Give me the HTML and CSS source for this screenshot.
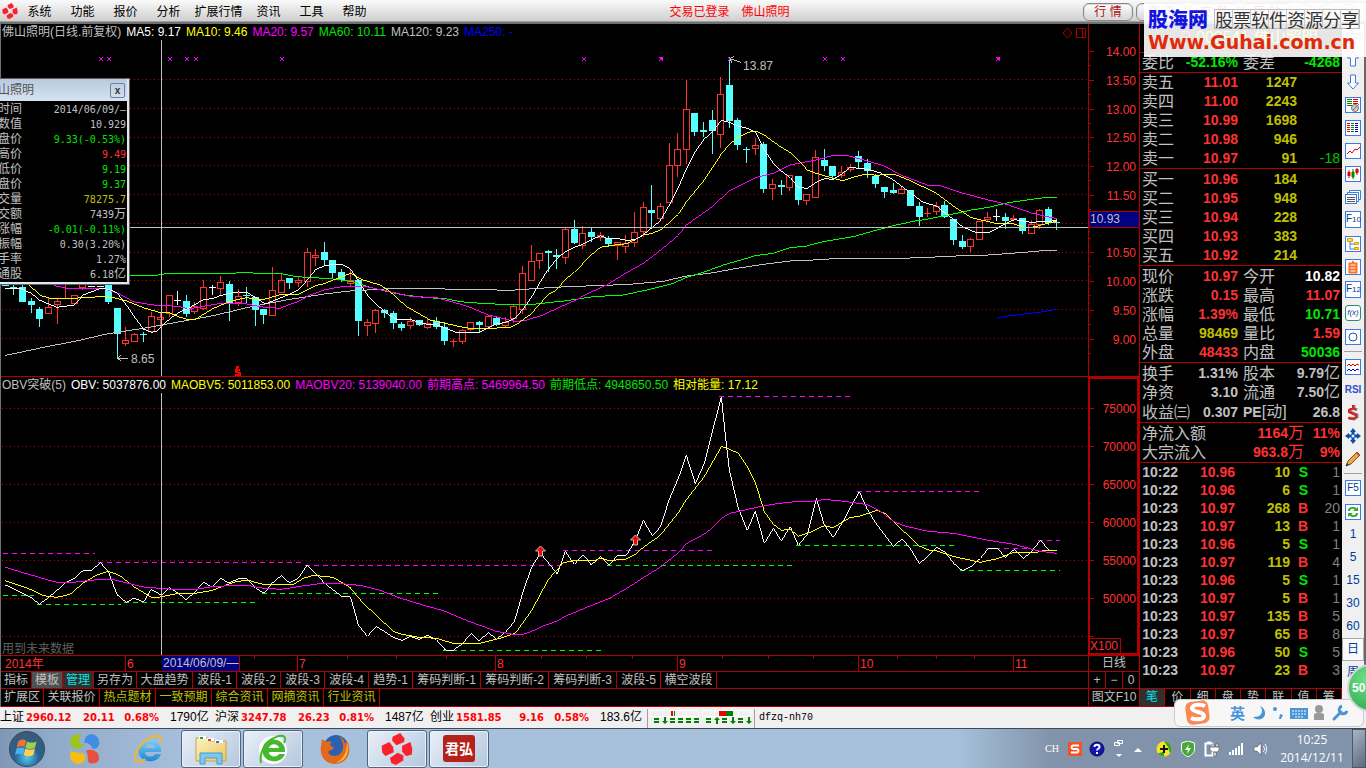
FILE: index.html
```html
<!DOCTYPE html>
<html lang="zh-CN">
<head>
<meta charset="utf-8">
<title>佛山照明 日线</title>
<link rel="stylesheet" href="styles.css">
</head>
<body>
<svg class="defs" aria-hidden="true">
  <defs>
    <symbol id="brand" viewBox="0 0 100 100"><g fill="#fb202c"><path d="M36 12 60 0l14 18-2 10-24 10-13-14z"/><path d="M66 40 92 28l6 22-2 18-18 4-12-14z"/><path d="M2 40 26 28l12 16 2 16-26 12L4 62z"/><path d="M28 78 52 62l18 8 0 16-24 14-14-6z"/></g></symbol>
    <symbol id="flag" viewBox="0 0 40 40"><path d="M9 13c4-3 7-3 10-1l-2 8c-4-2-7-1-10 1z" fill="#f0713a"/><path d="M20 13c4 2 8 2 12 0l-2 8c-4 2-8 2-12 0z" fill="#9bd04a"/><path d="M7 22c4-2 7-2 10 0l-2 8c-3-2-7-2-10 0z" fill="#4ab3ee"/><path d="M18 22c4 2 8 2 12 0l-2 8c-4 2-8 2-12 0z" fill="#ffd24a"/></symbol>
    <radialGradient id="orb" cx=".5" cy=".75" r=".7"><stop offset="0" stop-color="#4fc8f2"/><stop offset=".5" stop-color="#27628f"/><stop offset="1" stop-color="#3c5a75"/></radialGradient>
    <linearGradient id="ie" x1="0" y1="0" x2="0" y2="1"><stop offset="0" stop-color="#7fd0f7"/><stop offset="1" stop-color="#1f86d3"/></linearGradient>
    <linearGradient id="folder" x1="0" y1="0" x2="1" y2="1"><stop offset="0" stop-color="#fdf2c0"/><stop offset="1" stop-color="#e9c75f"/></linearGradient>
  </defs>
</svg>

<header class="menubar">
  <nav class="menu">
    <svg class="menu-logo"><use href="#brand"/></svg>
    <button>系统</button><button>功能</button><button>报价</button><button>分析</button><button class="wide">扩展行情</button><button>资讯</button><button>工具</button><button>帮助</button>
  </nav>
  <p class="session"><span>交易已登录</span><span>佛山照明</span></p>
  <div class="modes">
    <button>行 情</button><button>资 讯</button><button>交 易</button><button>网 站</button>
    <svg class="win-ctl" viewBox="0 0 64 20"><g fill="#eee" stroke="#999"><circle cx="10" cy="10" r="8"/><circle cx="32" cy="10" r="8"/><circle cx="54" cy="10" r="8"/></g><path d="M6 12h8M28 7h8v6h-8zM50 6l8 8m0-8-8 8" fill="none" stroke="#777" stroke-width="2"/></svg>
  </div>
</header>

<main class="workspace">
  <section class="board">
    <div class="pane pane-price">
      <div class="plot">
        <div class="legend">
          <span class="gray">佛山照明(日线.前复权)</span><span class="white">MA5: 9.17</span><span class="yellow">MA10: 9.46</span><span class="magenta">MA20: 9.57</span><span class="green">MA60: 10.11</span><span class="gray">MA120: 9.23</span><span class="blue">MA250: -</span>
          <svg class="legend-tools" viewBox="0 0 24 12"><path d="M5.500 1 10 6l-4.500 5L1 6zM14.500 1.500h9v9h-9zM20.500 1.500v9" fill="none" stroke="#b00000"/></svg>
        </div>
        <svg class="chart" id="price" viewBox="1 40 1087 336" preserveAspectRatio="none"></svg>
      </div>
      <svg class="axis" id="price-axis" viewBox="1088 24 51 352" preserveAspectRatio="none"></svg>
    </div>
    <div class="pane pane-obv">
      <div class="plot">
        <div class="legend">
          <span class="gray">OBV突破(5)</span><span class="white">OBV: 5037876.00</span><span class="yellow">MAOBV5: 5011853.00</span><span class="magenta">MAOBV20: 5139040.00</span><span class="magenta">前期高点: 5469964.50</span><span class="green">前期低点: 4948650.50</span><span class="yellow">相对能量: 17.12</span>
        </div>
        <svg class="chart" id="obv" viewBox="1 18 1087 262" preserveAspectRatio="none"></svg>
      </div>
      <svg class="axis" id="obv-axis" viewBox="1088 377 51 278" preserveAspectRatio="none"></svg>
    </div>
    <div class="row row-date">
      <svg class="dates" viewBox="1 656 1087 15" preserveAspectRatio="none">
        <path class="tick" d="M125.500 656v15M239.500 656v15M297.500 656v15M495.500 656v15M677.500 656v15M858.500 656v15M1013.500 656v15M254.500 656v3M347.500 656v3M396.500 656v3M446.500 656v3M541.500 656v3M586.500 656v3M632.500 656v3M722.500 656v3M768.500 656v3M813.500 656v3M897.500 656v3M936.500 656v3M974.500 656v3"/>
        <rect x="162" y="656" width="77" height="15" fill="#000080"/>
        <g class="red"><text x="5" y="668">2014年</text><text x="127" y="668">6</text><text x="299" y="668">7</text><text x="497" y="668">8</text><text x="679" y="668">9</text><text x="860" y="668">10</text><text x="1015" y="668">11</text></g>
        <text class="gray" x="163" y="667">2014/06/09/—</text>
      </svg>
      <button class="side-cell">日线</button>
    </div>
    <div class="row row-tabs">
      <div class="tabs"><button>指标</button><button class="picked">模板</button><button class="manage">管理</button><button>另存为</button><button class="t4">大盘趋势</button><button class="t3">波段-1</button><button class="t3">波段-2</button><button class="t3">波段-3</button><button class="t3">波段-4</button><button class="t3">趋势-1</button><button class="t5">筹码判断-1</button><button class="t5">筹码判断-2</button><button class="t5">筹码判断-3</button><button class="t3">波段-5</button><button class="t4">横空波段</button></div>
      <div class="side-cell zoomers"><button>+</button><button>−</button><button>0</button></div>
    </div>
    <div class="row row-links">
      <div class="tabs"><button>扩展区</button><button class="t4">关联报价</button><button class="t4 gold">热点题材</button><button class="t4 gold">一致预期</button><button class="t4 gold">综合资讯</button><button class="t4 gold">网摘资讯</button><button class="t4 gold">行业资讯</button></div>
      <button class="side-cell">图文F10</button>
    </div>
  </section>

  <section class="quote">
    <h1 class="stock"><span class="red">R</span> 000541 佛山照明</h1>
    <table class="q duo lead"><tr><th>委比</th><td class="green">-52.16%</td><th>委差</th><td class="green">-4268</td></tr></table>
    <table class="q depth">
      <tr><th>卖五</th><td>11.01</td><td>1247</td><td></td></tr>
      <tr><th>卖四</th><td>11.00</td><td>2243</td><td></td></tr>
      <tr><th>卖三</th><td>10.99</td><td>1698</td><td></td></tr>
      <tr><th>卖二</th><td>10.98</td><td>946</td><td></td></tr>
      <tr><th>卖一</th><td>10.97</td><td>91</td><td>-18</td></tr>
    </table>
    <table class="q depth">
      <tr><th>买一</th><td>10.96</td><td>184</td><td></td></tr>
      <tr><th>买二</th><td>10.95</td><td>948</td><td></td></tr>
      <tr><th>买三</th><td>10.94</td><td>228</td><td></td></tr>
      <tr><th>买四</th><td>10.93</td><td>383</td><td></td></tr>
      <tr><th>买五</th><td>10.92</td><td>214</td><td></td></tr>
    </table>
    <table class="q duo">
      <tr><th>现价</th><td class="red">10.97</td><th>今开</th><td class="white">10.82</td></tr>
      <tr><th>涨跌</th><td class="red">0.15</td><th>最高</th><td class="red">11.07</td></tr>
      <tr><th>涨幅</th><td class="red">1.39%</td><th>最低</th><td class="green">10.71</td></tr>
      <tr><th>总量</th><td class="gold">98469</td><th>量比</th><td class="red">1.59</td></tr>
      <tr><th>外盘</th><td class="red">48433</td><th>内盘</th><td class="green">50036</td></tr>
    </table>
    <table class="q duo">
      <tr><th>换手</th><td>1.31%</td><th>股本</th><td>9.79<i>亿</i></td></tr>
      <tr><th>净资</th><td>3.10</td><th>流通</th><td>7.50<i>亿</i></td></tr>
      <tr><th>收益㈢</th><td>0.307</td><th><b>PE</b>[动]</th><td>26.8</td></tr>
    </table>
    <table class="q flow">
      <tr><th>净流入额</th><td class="red">1164<i>万</i></td><td class="red">11%</td></tr>
      <tr><th>大宗流入</th><td class="red">963.8<i>万</i></td><td class="red">9%</td></tr>
    </table>
    <table class="q ticks">
      <tr><td>10:22</td><td>10.96</td><td>10</td><td class="green">S</td><td>1</td></tr>
      <tr><td>10:22</td><td>10.96</td><td>6</td><td class="green">S</td><td>1</td></tr>
      <tr><td>10:23</td><td>10.97</td><td>268</td><td class="red">B</td><td>20</td></tr>
      <tr><td>10:23</td><td>10.97</td><td>13</td><td class="red">B</td><td>1</td></tr>
      <tr><td>10:23</td><td>10.96</td><td>5</td><td class="green">S</td><td>1</td></tr>
      <tr><td>10:23</td><td>10.97</td><td>119</td><td class="red">B</td><td>4</td></tr>
      <tr><td>10:23</td><td>10.96</td><td>5</td><td class="green">S</td><td>1</td></tr>
      <tr><td>10:23</td><td>10.97</td><td>5</td><td class="red">B</td><td>1</td></tr>
      <tr><td>10:23</td><td>10.97</td><td>135</td><td class="red">B</td><td>5</td></tr>
      <tr><td>10:23</td><td>10.97</td><td>65</td><td class="red">B</td><td>8</td></tr>
      <tr><td>10:23</td><td>10.96</td><td>50</td><td class="green">S</td><td>5</td></tr>
      <tr><td>10:23</td><td>10.97</td><td>23</td><td class="red">B</td><td>3</td></tr>
    </table>
    <div class="quote-tabs"><button class="on">笔</button><button>价</button><button>细</button><button>盘</button><button>势</button><button>联</button><button>值</button><button>筹</button></div>
  </section>

  <aside class="toolbar">
    <button aria-label="后退"><svg viewBox="0 0 16 16"><path d="M1 8l6-6v4h8v4H7v4z" fill="#fff" stroke="#3d7be0"/></svg></button>
    <button aria-label="上"><svg viewBox="0 0 16 16"><path d="M8 1l5.500 6h-3v8h-5V7h-3z" fill="#fff" stroke="#3d7be0"/></svg></button>
    <button aria-label="下"><svg viewBox="0 0 16 16"><path d="M8 15l5.500-6h-3V1h-5v8h-3z" fill="#fff" stroke="#3d7be0"/></svg></button>
    <button aria-label="报价刷新"><svg viewBox="0 0 16 16"><rect class="frame" x=".5" y=".5" width="15" height="15"/><path d="M2 2.500h5M2 4.500h5M2 6.500h5M2 8.500h5" stroke="#080"/><path d="M8 2.500h5M8 4.500h5M8 6.500h5" stroke="#e00000"/><circle cx="10" cy="11" r="3.500" fill="#ccc" stroke="#777"/><path d="M7 14l7-7" stroke="#777"/></svg></button>
    <button aria-label="列表"><svg viewBox="0 0 16 16"><rect class="frame" x=".5" y=".5" width="15" height="15"/><path d="M2 3.500h3M2 5.500h3M2 7.500h3M2 9.500h3M2 11.500h3" stroke="#f00000"/><path d="M6 3.500h3M6 5.500h3M6 7.500h3M6 9.500h3M6 11.500h3" stroke="#080"/><path d="M10 3.500h3M10 5.500h3M10 7.500h3M10 9.500h3M10 11.500h3" stroke="#00c"/></svg></button>
    <button aria-label="分时"><svg viewBox="0 0 16 16"><rect class="frame" x=".5" y=".5" width="15" height="15"/><path d="M2 11l3-3 2 2 3-4 2 1 3-3" fill="none" stroke="#e00000"/></svg></button>
    <button aria-label="K线"><svg viewBox="0 0 16 16"><rect class="frame" x=".5" y=".5" width="15" height="15"/><path d="M4 4v8M12 2v7" stroke="#e00000"/><path d="M2.500 6h3v4h-3zM10.500 3h3v4h-3z" fill="#e00000"/><path d="M8 3v10M7 6h2v5H7z" fill="#080" stroke="#080"/></svg></button>
    <button aria-label="资料"><svg viewBox="0 0 16 16"><path class="frame" d="M4.500 1.500h11v9h-11z"/><path class="frame" d="M2.500 3.500h11v9h-11z"/><rect class="frame" x=".5" y="5.500" width="11" height="9"/><path d="M2 8.500h8M2 10.500h8M2 12.500h8" stroke="#555"/></svg></button>
    <button class="fkey">F<small>10</small></button>
    <button aria-label="板块"><svg viewBox="0 0 16 16"><rect class="frame" x=".5" y=".5" width="15" height="15"/><path d="M5 5v8h5M5 8h5" fill="none" stroke="#3d7be0"/><path d="M2.500 2.500h5v3h-5zM9.500 6.500h4v2h-4zM9.500 11.500h4v2h-4z" fill="#ffd94a" stroke="#d9a000"/></svg></button>
    <button aria-label="自选"><svg viewBox="0 0 16 16"><rect class="frame" x=".5" y=".5" width="15" height="15"/><path d="M4.500 4.500h7v9h-7zM4 7.500h8M4 10.500h8M8 2v2" fill="#fff" stroke="#ff7328" stroke-width="2"/></svg></button>
    <button class="fkey">F<small>12</small></button>
    <button class="fx">f(x)</button>
    <button aria-label="圆"><svg viewBox="0 0 16 16"><rect class="frame" x=".5" y=".5" width="15" height="15"/><circle cx="8" cy="8" r="4" fill="none" stroke="#1452b8"/></svg></button>
    <hr>
    <button aria-label="叠加"><svg viewBox="0 0 16 16"><rect class="frame" x=".5" y=".5" width="15" height="15"/><path d="M2 7l2-2 2 2 2-2 2 2 2-2 2 1" fill="none" stroke="#e00000"/><path d="M2 12l2-2 2 2 2-2 2 2 2-2 2 1" fill="none" stroke="#00c"/></svg></button>
    <button class="rsi">RSI</button>
    <button aria-label="S"><svg viewBox="0 0 16 16"><path d="M12 5L9 3 5 5v2l7 3v2l-3 2-5-1M9 0v3" fill="none" stroke="#8a7f7f" stroke-width="3"/><path d="M11 5L8 3 4 5v2l7 3v2l-3 2-5-1M8 0v3" fill="none" stroke="#d82020" stroke-width="2"/></svg></button>
    <button aria-label="移动"><svg viewBox="0 0 16 16"><path d="M8 0l3 4H5zM8 16l3-4H5zM0 8l4-3v6zM16 8l-4-3v6z" fill="#0c4cae"/><path d="M8 3v10M3 8h10" stroke="#0c4cae" stroke-width="3"/><circle cx="8" cy="8" r="1.500" fill="#eee"/></svg></button>
    <button aria-label="画线"><svg viewBox="0 0 16 16"><path d="M1 15l2-5 9-9 3 3-9 9z" fill="#eba840" stroke="#7a5524"/><path d="M1 15l1-3 2 2z" fill="#333"/><path d="M11 2l3 3 1-1-3-3z" fill="#d04040"/></svg></button>
    <hr>
    <button class="fkey">F5</button>
    <button aria-label="刷新"><svg viewBox="0 0 16 16"><rect class="frame" x=".5" y=".5" width="15" height="15"/><path d="M4 7c0-4 6-4 7-1m1 3c0 4-6 4-7 1" fill="none" stroke="#35a535" stroke-width="2"/><path d="M8 7h5V3zM8 9H3v4z" fill="#35a535"/></svg></button>
    <button>1</button><button>5</button><button>15</button><button>30</button><button>60</button>
    <button class="period">日</button><button class="period off">周</button>
  </aside>

  <section class="tip">
    <h2>佛山照明 <button aria-label="关闭">x</button></h2>
    <table>
      <tr><th>时间</th><td>2014/06/09/—</td></tr>
      <tr><th>数值</th><td>10.929</td></tr>
      <tr><th>开盘价</th><td class="green">9.33(-0.53%)</td></tr>
      <tr><th>最高价</th><td class="red">9.49</td></tr>
      <tr><th>最低价</th><td class="green">9.19</td></tr>
      <tr><th>收盘价</th><td class="green">9.37</td></tr>
      <tr><th>成交量</th><td class="gold">78275.7</td></tr>
      <tr><th>成交额</th><td>7439<i>万</i></td></tr>
      <tr><th>涨幅</th><td class="green">-0.01(-0.11%)</td></tr>
      <tr><th>振幅</th><td>0.30(3.20%)</td></tr>
      <tr><th>换手率</th><td>1.27%</td></tr>
      <tr><th>流通股</th><td>6.18<i>亿</i></td></tr>
    </table>
  </section>
</main>

<footer class="status">
  <div class="index"><span>上证</span><b>2960.12</b><b class="r">20.11</b><b class="r">0.68%</b><span class="amt">1790亿</span></div>
  <div class="index"><span>沪深</span><b>3247.78</b><b class="r">26.23</b><b class="r">0.81%</b><span class="amt">1487亿</span></div>
  <div class="index"><span>创业</span><b>1581.85</b><b class="r">9.16</b><b class="r">0.58%</b><span class="amt">183.6亿</span></div>
  <svg class="meter" viewBox="0 0 108 20">
    <path d="M.5 1v19M107.500 1v19" stroke="#a0a0a0"/>
    <path d="M3.500 2.500h48v6h-48zM15.500 2v7M27.500 2v7M39.500 2v7M55.500 2.500h48v6h-48zM67.500 2v7M91.500 2v7" fill="none" stroke="#fff"/>
    <path d="M24 3h2v5h-2zM72 3h7v5h-7z" fill="#f00000"/><path d="M27 3h1v5h-1zM79 3h7v5h-7z" fill="#008000"/>
    <path d="M7 11h5M7 14h5M23 11h5M23 14h5M31 11h5M31 14h5M39 11h5M39 14h5M47 11h5M47 14h5M59 11h5M59 14h5M75 11h5M75 14h5M91 11h5M91 14h5" stroke="#008000" stroke-width="2"/>
    <path d="M17 9h2v4h2l-3 3-3-3h2zM85 9h2v4h2l-3 3-3-3h2zM101 9h2v4h2l-3 3-3-3h2zM69 16h2v-4h2l-3-3-3 3h2z" fill="#008000"/>
  </svg>
  <span class="server">dfzq-nh70</span>
</footer>

<footer class="taskbar">
  <button class="app orb" aria-label="开始"><svg viewBox="0 0 38 38"><circle cx="19" cy="19" r="17.500" fill="url(#orb)" stroke="#34495e"/><use href="#flag" width="32" height="32" x="3" y="1"/></svg></button>
  <button class="app pinned" aria-label="桌面助手"><svg viewBox="0 0 32 32"><path d="M12 2C4-1-1 7 2 12c3 6 11 4 13 0-5 0-6-5-3-10z" fill="#9cc41c"/><path d="M16 6c2-7 13-6 14 2 1 5-2 8-6 8-2-4-5-7-9-6z" fill="#3f8de6"/><path d="M2 18c4 2 9 1 13 3 3 4 0 10-6 10S-1 24 2 18z" fill="#f6bd16"/><path d="M17 18c5-3 13 0 13 7 0 5-5 6-10 5-2-4 0-7-3-12z" fill="#e6503c"/></svg></button>
  <button class="app" aria-label="IE"><svg viewBox="0 0 32 32"><path d="M28 19H12c0 5 8 6 10 2h6c-2 6-8 8-13 7-7-1-11-7-9-14 2-8 13-10 19-4 3 3 3 6 3 9zM12 15h10c-1-5-9-5-10 0z" fill="url(#ie)"/><path d="M27 10c3-8-3-9-10-5C9 9 1 19 2 26c1 5 7 3 10 0" fill="none" stroke="#f3b72b" stroke-width="2"/></svg></button>
  <button class="app open" aria-label="资源管理器"><svg viewBox="0 0 32 32"><path d="M1 5h12l2 3h16v20H1z" fill="url(#folder)" stroke="#c8a348"/><path d="M4 3h7v3H4z" fill="#fff"/><path d="M5 4h3v2H5z" fill="#2b9b3a"/><path d="M12 5h7v3h-7z" fill="#fff"/><path d="M13 6h3v2h-3z" fill="#e04040"/><path d="M20 7h8v3h-8z" fill="#fff"/><path d="M21 8h3v2h-3z" fill="#3078d0"/><path d="M5 31V20h22v11h-5v-6H10v6z" fill="#7cc8ee" stroke="#4a9cc8"/></svg></button>
  <button class="app open" aria-label="360浏览器"><svg viewBox="0 0 32 32"><circle cx="16" cy="17" r="14" fill="#fff"/><path d="M28 19H12c0 5 8 6 10 2h6c-2 6-8 8-13 7-7-1-11-7-9-14 2-8 13-10 19-4 3 3 3 6 3 9zM12 15h10c-1-5-9-5-10 0z" fill="#46b82e"/><path d="M27 10c4-8-3-9-10-5C8 9 2 20 4 30" fill="none" stroke="#46b82e" stroke-width="2"/></svg></button>
  <button class="app" aria-label="火狐"><svg viewBox="0 0 32 32"><circle cx="17" cy="14" r="12" fill="#2b61b0"/><path d="M20 3c4 2 6 5 6 8l2-3c6 11 0 23-12 23C7 31 0 23 2 13L3 6l4 3c2-1 4-1 6 0-3 2-2 5 2 5-1 4-5 3-6 5 2 5 9 5 13 1 4-5 2-12-2-17z" fill="#e2681c"/><path d="M28 10c3 9-1 18-11 20 8-4 11-11 11-20z" fill="#f8c43a"/></svg></button>
  <button class="app open" aria-label="行情"><svg viewBox="0 0 32 32"><use href="#brand"/></svg></button>
  <button class="app open" aria-label="君弘"><span class="junhong">君弘</span></button>
  <div class="tray">
    <span class="lang">CH</span>
    <svg class="t1" viewBox="0 0 16 16"><rect x="1" y="1" width="14" height="14" fill="#f4502a"/><path d="M12 4.500H6C4 5 4 7.500 6 8h4c2 .5 2 3 0 3.500H4" fill="none" stroke="#fff" stroke-width="2"/></svg>
    <svg class="t2" viewBox="0 0 16 16"><circle cx="8" cy="8" r="7" fill="#1414b4" stroke="#0a0a50"/><path d="M5.500 6c0-3 5-3 5 0 0 2-2.500 1.500-2.500 3.500M8 11v2" fill="none" stroke="#fff" stroke-width="2"/></svg>
    <svg class="t3" viewBox="0 0 16 24"><path d="M6.500 3.500h5v3h-5zM3.500 5.500h5v3h-5z" fill="#8193aa" stroke="#fff"/><path d="M5 17h6l-3 3z" fill="#fff"/></svg>
    <svg class="t4" viewBox="0 0 16 16"><path d="M4 11h8L8 7z" fill="#fff"/></svg>
    <svg class="t5" viewBox="0 0 16 16"><circle cx="8" cy="8" r="7.500" fill="#f6e620"/><path d="M8 .5a7.500 7.500 0 0 1 6 12L12 6z" fill="#3aa22c"/><path d="M8 15.500a7.500 7.500 0 0 1-6-3l6-2z" fill="#3aa22c"/><path d="M8 4v8M4 8h8" stroke="#111" stroke-width="2"/></svg>
    <svg class="t6" viewBox="0 0 16 16"><path d="M8 0l6.500 2v6c0 4-3 6-6.500 8-3.500-2-6.500-4-6.500-8V2z" fill="#46a838" stroke="#fff"/><path d="M9 3L5 9h3l-1 4 4-6H8z" fill="#fff"/></svg>
    <svg class="t7" viewBox="0 0 16 16"><path d="M1.500 2.500h7v12h-7zM3 1.500h4" fill="none" stroke="#fff" stroke-width="2"/><path d="M6 6h9v3l-2 2H9L6 9zM8 3h2v3H8zM12 3h2v3h-2zM10 11h2v4h-2z" fill="#fff" stroke="#444" stroke-width=".5"/></svg>
    <svg class="t8" viewBox="0 0 16 16"><path d="M2 14v-3M5 14V9M8 14V7M11 14V5M14 14V2" stroke="#fff" stroke-width="2"/></svg>
    <svg class="t9" viewBox="0 0 16 16"><path d="M2 6h3l4-4v12L5 10H2z" fill="#fff" stroke="#444" stroke-width=".5"/><path d="M11 5c2 2 2 4 0 6M13 3c2 3 2 7 0 10" fill="none" stroke="#fff"/></svg>
  </div>
  <div class="clock"><span>10:25</span><span>2014/12/11</span></div>
  <button class="peek" aria-label="显示桌面"></button>
</footer>

<div class="ad">
  <p><strong>股海网</strong><span class="slogan">股票软件资源分享</span></p>
  <p class="site">Www.Guhai.com.cn</p>
</div>
<div class="ime">
  <svg class="ime-logo" viewBox="0 0 30 28"><rect x="3" y="2" width="23" height="23" rx="6" fill="#f78a55" transform="rotate(-8 15 14)"/><path d="M22 7C18 5 10 5 9 9c0 5 12 3 12 8 0 4-9 4-13 2" fill="none" stroke="#fff" stroke-width="4"/></svg>
  <span class="ime-lang">英</span>
  <svg class="ime-keys" viewBox="0 0 98 20"><g fill="#4a94d8"><path d="M9 3c5 6 0 12-7 11 5 5 13 2 12-5-1-3-2-5-5-6z"/><circle cx="24" cy="6" r="2"/><path d="M29 11l3 1-2 4h-2z"/><path d="M39 5h18v11H39z"/></g><path d="M83 16l7-7" stroke="#4a94d8" stroke-width="3" stroke-linecap="round"/><path d="M91 3a4 4 0 1 0 5 5" fill="none" stroke="#4a94d8" stroke-width="3"/><path d="M41 8h14M41 11h14M44 14h8" stroke="#fff" stroke-dasharray="2 1"/><path d="M63 17v-5c0-2 3-2 5-2s5 0 5 2v5z" fill="#999"/><circle cx="68" cy="6" r="4" fill="#999"/></svg>
</div>
<div class="ball">50</div>
<script src="chart.js"></script>
</body>
</html>
```
FILE: styles.css
```css
* { box-sizing: border-box; }
body {
  margin: 0; height: 100vh; display: flex; flex-direction: column;
  position: relative; overflow: hidden; background: #000; color: #c0c0c0;
  font: 12px/15px "Liberation Sans", "Noto Sans CJK SC", sans-serif;
}
button { font: inherit; color: inherit; background: none; border: 0; padding: 0; margin: 0; white-space: nowrap; }
p, h1, h2 { margin: 0; font-size: inherit; font-weight: normal; }
i { font-style: normal; font-weight: normal; }
svg { display: block; }
.defs { position: absolute; width: 0; height: 0; }

.gray { color: #c0c0c0; fill: #c0c0c0; }
.white { color: #fff; }
.yellow { color: #ff0; }
.magenta { color: #f0f; }
.green { color: #00e600; }
.blue { color: #00f; }
.red { color: #ff3232; fill: #ff3232; }
.gold { color: #c0c000; }

/* menu bar */
.menubar {
  display: grid; grid-template-columns: 376px 1fr 283px; flex: 0 0 24px; align-items: center;
  background: linear-gradient(#fafafa, #cfcfcf 21px, #707070 22px, #707070); color: #000; overflow: hidden;
}
.menu { display: flex; align-items: center; }
.menu-logo { width: 16px; height: 16px; margin: 0 0 3px 2px; }
.menu button { width: 43px; height: 23px; }
.menu .wide { width: 57px; }
.session { display: flex; justify-content: center; gap: 12px; color: #f00; }
.modes { display: flex; gap: 3px; align-items: center; height: 23px; }
.modes button {
  flex: 0 0 50px; height: 18px; border: 1px solid #888; border-radius: 6px; color: #b01010;
  background: linear-gradient(#fff, #d4d4d4); box-shadow: inset 0 0 0 1px #ddd;
}
.win-ctl { width: 64px; height: 20px; }

/* chart area */
.workspace { position: relative; flex: 1; min-height: 0; display: grid; grid-template-columns: minmax(0, 1fr) 203px 24px; }
.board { display: flex; flex-direction: column; min-width: 0; border-left: 1px solid #707070; }
.pane { display: flex; min-height: 0; flex: 352 0 0; border-bottom: 1px solid #b00000; }
.pane-obv { flex-grow: 278; }
.plot { flex: 1; min-width: 0; display: flex; flex-direction: column; }
.legend { display: flex; gap: 5px; flex: 0 0 16px; padding: 1px 2px 0 1px; white-space: nowrap; }
.legend-tools { width: 24px; height: 12px; margin: 2px 0 0 auto; }
.chart { flex: 1; width: 100%; min-height: 0; }
.axis { flex: 0 0 51px; height: 100%; }
.crisp { shape-rendering: crispEdges; }
.crisp path { fill: none; stroke-width: 3; }
.crisp .heavy { stroke-width: 6; }
.dates { flex: 1; min-width: 0; height: 100%; }
.tick { stroke: #b00000; fill: none; shape-rendering: crispEdges; }
.row { display: flex; border-bottom: 1px solid #b00000; }
.row-date { flex: 0 0 16px; }
.row-tabs { flex: 0 0 17px; }
.row-links { flex: 0 0 18px; }
.side-cell { flex: 0 0 51px; border-left: 1px solid #b00000; }
.zoomers { display: flex; }
.zoomers button { flex: 1; border-right: 1px solid #b00000; }
.zoomers button:last-child { border-right: 0; }
.tabs { flex: 1; display: flex; min-width: 0; overflow: hidden; }
.tabs button { padding: 0 3px; border-right: 1px solid #b00000; }
.tabs .t3 { min-width: 44px; }
.tabs .t4 { min-width: 56px; }
.tabs .t5 { min-width: 68px; }
.tabs .picked { background: #505050; }
.tabs .manage { background: #303030; color: #00e5e5; }

/* quote panel */
.quote { border-left: 1px solid #b00000; display: flex; flex-direction: column; min-width: 0; }
.stock { flex: 0 0 29px; border-bottom: 1px solid #b00000; padding: 6px 0 0 40px; font-size: 16px; color: #ff0; white-space: nowrap; }
.q { table-layout: fixed; width: 100%; border-collapse: collapse; border-bottom: 1px solid #b00000; font-size: 14px; margin-top: 1px; }
.lead, .lead + .q, .q.ticks { margin-top: 0; }
.q tr { height: 19px; }
.q th, .q td { padding: 0; line-height: 19px; height: 19px; white-space: nowrap; text-align: right; font-weight: bold; }
.q th { text-align: left; font-weight: normal; font-size: 16px; padding-left: 2px; }
.q th b { font-size: 14px; }
.q i { font-size: 16px; line-height: 15px; }
.q tr > :last-child { padding-right: 2px; }
.duo th:first-child { width: 40px; }
.duo td:nth-child(2) { width: 58px; }
.duo th:nth-child(3) { width: 46px; padding-left: 5px; }
.depth th { width: 40px; }
.depth td:nth-child(2) { width: 58px; color: #ff3232; }
.depth td:nth-child(3) { width: 59px; color: #c0c000; }
.depth td:last-child { color: #00c800; font-weight: normal; }
.flow th { width: 80px; }
.flow td:nth-child(2) { width: 84px; }
.q.ticks { border-bottom: 0; }
.ticks tr, .ticks td { height: 18px; line-height: 18px; }
.ticks td:first-child { width: 38px; }
.ticks td:nth-child(2) { width: 57px; color: #ff3232; }
.ticks td:nth-child(3) { width: 55px; color: #c0c000; }
.ticks td:nth-child(4) { width: 18px; }
.ticks td:last-child { color: #808080; font-weight: normal; }
.quote-tabs { display: grid; grid-template-columns: repeat(8, 1fr); height: 19px; margin-top: auto; border: solid #b00000; border-width: 1px 0; }
.quote-tabs button { border-right: 1px solid #b00000; }
.quote-tabs .on { background: #303030; color: #00e5e5; }

/* right tool strip */
.toolbar { background: #f0f0f0; border-right: 2px solid #686868; display: flex; flex-direction: column; align-items: center; overflow: hidden; color: #003c9c; }
.toolbar button { flex: 0 0 23px; width: 22px; display: grid; place-items: center; }
.toolbar svg { width: 16px; height: 16px; }
.toolbar hr { flex: 0 0 1px; width: 18px; margin: 3px 0; border: 0; background: #a0a0a0; }
.frame { fill: #fff; stroke: #3d7be0; }
.toolbar .fkey, .toolbar .fx { flex-basis: 16px; width: 16px; margin: 3px 0 4px; border: 1px solid #3d7be0; background: #fff; display: block; font-size: 10px; line-height: 14px; }
.fkey small { font-size: 8px; }
.toolbar .fx { border-radius: 3px; border-color: #2a8a80; font-size: 8px; font-style: italic; }
.rsi { font-size: 10px; font-weight: bold; color: #3050c8; }
.toolbar .period { border: 1px solid #aaa; background: #fafafa; }
.toolbar .off { border-color: transparent; background: none; }

/* floating data window, partly off the left edge */
.tip { position: absolute; left: -17px; top: 54px; width: 147px; border: 1px solid #606060; box-shadow: inset 0 0 0 2px #dfe8f2; background: #000; padding: 0 2px 2px; }
.tip h2 { display: flex; justify-content: space-between; align-items: center; height: 22px; margin-bottom: 1px; background: linear-gradient(#b9cade, #d6e3f1); color: #555; padding-right: 2px; }
.tip button { width: 15px; height: 15px; line-height: 11px; border: 1px solid #6d82a5; border-radius: 2px; color: #333; font-weight: bold; font-size: 10px; }
.tip table { width: 100%; border-collapse: collapse; }
.tip th { width: 36px; padding: 0; text-align: right; font-weight: normal; height: 15px; line-height: 15px; white-space: nowrap; }
.tip td { padding: 0 1px 0 0; text-align: right; font: 10px/15px "DejaVu Sans Mono", "Noto Sans CJK SC", monospace; white-space: nowrap; }
.tip i { font-size: 12px; line-height: 12px; }

/* index strip */
.status { flex: 0 0 22px; display: flex; align-items: center; background: #f0f0f0; border-bottom: 1px solid #404850; color: #000; }
.index { display: grid; grid-template-columns: 26px 57px 31px 45px 56px; flex: 0 0 215px; align-items: center; white-space: nowrap; }
.index b { font: bold 10px/15px "DejaVu Sans", sans-serif; color: #f00; }
.index .r { text-align: right; }
.index .amt { padding-left: 11px; }
.meter { width: 108px; height: 20px; margin-left: 2px; }
.server { font: 10px/15px "Liberation Mono", monospace; margin-left: 4px; }

/* task bar */
.taskbar { flex: 0 0 39px; display: flex; align-items: center; gap: 2px; background: linear-gradient(90deg, #7f97b5, #8fa9c8 50px, #a7c0dc 190px, #a7c0dc 70%, #8193aa 77%, #8193aa); }
.app { flex: 0 0 60px; height: 38px; display: grid; place-items: center; border-radius: 3px; }
.app svg { width: 32px; height: 32px; }
.orb { flex-basis: 53px; }
.orb svg { width: 38px; height: 38px; }
.pinned { margin-right: 2px; }
.open { border: 1px solid #4f6480; box-shadow: inset 0 0 0 1px #e8f0fa; background: linear-gradient(135deg, #e9f0f8, #b4c7de); }
.junhong { width: 32px; height: 27px; background: #b5221c; color: #fff; border-radius: 3px; font: bold 14px/26px "Noto Sans CJK SC", sans-serif; }
.tray { display: flex; align-items: center; gap: 8px; margin: 0 4px 0 auto; }
.tray svg { width: 16px; height: 16px; }
.tray .t2 { margin-left: -2px; }
.tray .t3 { height: 24px; margin: 0 -3px 0 -2px; }
.tray .t4 { margin-right: 2px; margin-left: -2px; }
.lang { font: 10px/15px "Liberation Serif", serif; color: #fff; }
.clock { width: 76px; display: flex; flex-direction: column; text-align: center; font: 12px/18px "Open Sans", sans-serif; color: #fff; }
.peek { flex: 0 0 14px; height: 39px; border: 1px solid #4c5868; background: linear-gradient(135deg, #a8b4c4, #5d6b80); }

/* overlays */
.ad { position: absolute; right: 0; top: 3px; width: 222px; height: 54px; padding: 4px 0 0 4px; background: rgba(255, 255, 255, .9); }
.ad p { display: flex; align-items: center; gap: 6px; line-height: 24px; height: 24px; white-space: nowrap; }
.ad strong { font: 900 20px/24px "Noto Sans CJK SC", sans-serif; color: #1414e0; }
.slogan { font: 18px/18px "Noto Sans CJK SC", sans-serif; color: #333; border: 1px solid #bbb; background: repeating-linear-gradient(90deg, transparent 0 17px, #ccc 17px 18px); }
.ad .site { font: bold 19px/22px "DejaVu Sans", sans-serif; color: #e02a0a; height: 22px; }
.ime { position: absolute; right: 2px; bottom: 41px; width: 190px; height: 28px; border: 1px solid #ccc; border-radius: 6px; background: #f7f7f7; display: flex; align-items: center; padding-left: 8px; }
.ime-logo { width: 30px; height: 28px; }
.ime-lang { margin: 0 6px 0 17px; color: #4a94d8; font: bold 15px/20px "Noto Sans CJK SC", sans-serif; }
.ime-keys { width: 98px; height: 20px; }
.ball { position: absolute; right: -29px; top: 664px; width: 48px; height: 48px; border-radius: 50%; background: radial-gradient(circle at 40% 30%, #6fe08a, #24a148); border: 2px solid #d4d4d4; color: #fff; font: bold 12px/44px "Liberation Sans", sans-serif; padding-left: 3px; }
```
FILE: chart.js
```js
// Chart data is kept on a grid of thirds of a pixel.
const candles = `c855,855,858,858 c850,860,868,885 c850,860,906,906 c895,904,915,938 c920,928,957,980 r893,922,941,941 r897,902,916,971 r840,840,850,897 r886,886,912,912 r840,850,863,871 w858,858,861,861 w858,858,861,861 c840,845,906,911 c924,924,1001,1075 r981,1021,1031,1037 r999,1003,1025,1025 c995,1002,1005,1025 r935,949,997,997 r935,952,959,980 r885,885,943,950 w873,900,903,914 c885,903,941,952 r906,917,935,943 r840,860,927,930 w855,862,865,884 r827,847,866,884 c842,852,912,963 r866,888,908,917 c862,885,888,908 c890,890,930,978 c927,927,944,971 r800,871,947,947 r822,841,878,880 c834,834,850,866 r830,841,849,860 r744,757,845,860 r748,766,773,797 c726,756,780,795 c780,780,818,838 c806,816,840,845 r808,841,851,860 c837,840,962,1007 r957,967,979,1007 r926,931,971,998 c927,930,938,954 c934,940,969,987 c965,972,984,993 r950,962,979,986 c959,961,974,977 r957,969,984,987 c952,964,981,986 c966,981,1022,1035 r1016,1023,1026,1040 r987,991,1025,1031 r967,967,989,993 c962,967,975,995 r946,949,980,985 c949,954,975,978 r951,965,977,982 r915,919,956,970 r797,820,929,942 r735,784,842,842 r760,760,784,806 c750,754,758,815 c747,766,770,806 r682,688,773,792 c660,687,729,731 r678,700,737,747 c683,696,711,725 r696,706,713,722 c708,714,732,742 r727,727,739,780 r705,728,740,759 r636,697,728,741 r606,622,695,710 c555,630,639,680 r609,619,656,660 r429,496,608,608 r399,448,497,530 r240,328,449,492 c339,339,395,407 c366,390,395,411 c329,360,392,462 r230,283,404,443 c170,255,362,384 c354,360,434,449 c441,447,450,488 r414,436,446,464 c426,432,567,578 r537,553,566,600 c540,555,560,584 r526,526,563,573 c528,528,600,614 r583,583,602,614 r450,472,593,593 c447,480,498,512 c498,498,528,538 r497,517,529,533 r491,500,511,516 c453,468,486,503 c477,489,512,533 c521,527,551,563 c561,561,576,594 c548,570,578,581 r560,566,583,583 c570,570,617,617 c606,618,651,678 r624,640,643,651 r606,618,635,645 c602,615,650,653 c657,657,719,735 c705,723,741,746 r714,718,740,755 r664,664,721,721 r636,650,661,667 w627,648,651,663 c639,651,662,686 r644,655,659,664 c654,654,692,701 r660,673,703,703 r627,631,675,686 c621,627,668,674 c657,666,669,689`;
const ma = [
  ['#c0c0c0', '15,1066 60,1057 150,1038 220,1025 320,1002 430,985 540,965 640,947 740,923 790,913 870,898 973,882 1050,873 1170,866 1310,866 1380,869 1450,869 1530,871 1600,866 1700,860 1820,856 1900,852 1990,844 2060,828 2140,818 2210,805 2290,793 2371,783 2440,780 2520,775 2740,774 2870,768 2965,765 3060,758 3140,751 3172,751'],
  ['#00ff00', '390,826 468,826 500,821 700,821 710,818 750,818 780,821 850,822 890,830 940,833 1000,837 1060,845 1110,862 1160,874 1200,883 1270,892 1340,897 1380,905 1430,909 1520,914 1600,913 1700,902 1780,890 1870,885 1940,870 2020,850 2060,832 2110,817 2170,795 2240,775 2266,767 2320,760 2371,743 2420,738 2470,725 2560,710 2620,693 2680,677 2740,664 2785,657 2850,644 2914,630 2965,622 3025,608 3094,598 3140,592 3172,592'],
  ['#ff00ff', '163,857 200,865 310,865 355,880 400,905 460,915 535,919 565,927 650,912 740,912 793,922 840,925 870,913 895,905 930,885 973,870 1024,860 1090,858 1160,873 1231,889 1309,893 1380,912 1410,922 1465,945 1520,958 1545,965 1580,960 1621,948 1672,925 1723,902 1774,876 1820,855 1880,818 1930,790 1985,748 2035,706 2059,675 2113,637 2137,620 2188,572 2266,533 2325,518 2371,495 2410,487 2449,480 2500,466 2540,466 2602,483 2650,497 2707,527 2785,556 2820,557 2887,579 2965,600 3020,613 3094,639 3150,652 3172,656'],
  ['#ffff00', '88,857 125,888 160,897 200,896 301,890 340,893 380,903 430,923 481,938 508,938 535,950 560,958 586,958 640,925 688,905 720,897 740,893 767,898 793,898 844,883 895,883 946,857 973,851 1000,840 1051,820 1090,840 1140,855 1170,875 1220,920 1290,960 1380,980 1410,985 1470,985 1530,982 1552,972 1594,941 1621,910 1645,884 1672,868 1696,838 1723,817 1774,765 1801,742 1830,737 1880,731 1906,719 1930,705 1957,700 1986,687 2035,643 2059,606 2113,540 2164,462 2188,433 2215,412 2245,397 2266,393 2293,405 2335,436 2371,458 2400,486 2422,510 2449,520 2490,532 2527,542 2580,526 2602,522 2629,526 2680,522 2734,543 2809,580 2863,620 2914,653 2965,665 2992,672 3043,672 3080,684 3110,679 3150,668 3172,663'],
  ['#ffffff', '15,865 60,865 94,880 118,900 170,922 223,915 250,885 301,865 326,868 352,879 379,915 403,950 430,987 454,997 470,993 485,978 508,958 535,938 565,925 600,905 610,900 640,895 661,887 688,880 715,876 740,877 767,892 795,912 844,893 868,883 895,870 915,848 946,810 973,797 1000,793 1024,793 1051,806 1070,835 1102,885 1129,913 1160,940 1190,958 1231,959 1282,973 1309,974 1336,984 1365,996 1375,997 1438,997 1465,983 1489,972 1516,967 1543,956 1567,930 1594,893 1621,845 1645,808 1672,775 1696,755 1723,742 1750,732 1774,720 1801,707 1825,717 1852,715 1879,721 1906,719 1930,704 1957,682 1981,662 2008,615 2035,563 2059,507 2086,455 2113,417 2137,396 2164,361 2188,367 2215,378 2242,385 2266,396 2293,450 2320,490 2344,513 2371,533 2395,562 2422,565 2449,547 2473,536 2500,538 2527,521 2551,502 2602,508 2640,518 2680,540 2734,581 2770,607 2809,618 2836,640 2863,660 2887,680 2914,692 2935,699 2965,699 2992,685 3005,677 3043,659 3094,667 3172,662'],
  ['#0000ff', '2992,955 3015,949 3060,944 3090,940 3130,935 3160,929 3172,928']
];
const obv = [
  ['#ffffff', '16,630 40,641 67,655 94,668 118,688 145,668 170,647 196,624 223,610 249,587 275,587 301,562 326,592 340,630 352,660 379,682 403,669 430,682 454,643 485,661 508,638 535,655 559,674 586,650 610,622 637,636 661,610 688,624 715,611 740,610 767,640 793,655 817,624 844,602 868,623 895,610 922,570 946,594 973,624 1000,645 1024,663 1051,666 1063,705 1075,750 1102,784 1129,755 1153,769 1180,787 1207,796 1231,784 1258,793 1282,781 1309,794 1336,825 1360,826 1387,806 1414,775 1438,798 1465,772 1489,793 1516,772 1543,740 1567,658 1594,578 1621,535 1645,563 1672,597 1696,529 1723,568 1750,539 1774,570 1801,545 1828,570 1852,542 1879,541 1906,497 1930,436 1957,482 1981,456 2008,373 2035,310 2059,241 2086,326 2113,265 2137,170 2164,66 2176,180 2188,285 2215,400 2242,466 2266,409 2293,505 2320,460 2344,497 2371,455 2395,511 2422,478 2449,370 2473,450 2500,487 2527,443 2551,398 2578,350 2602,403 2629,447 2656,482 2680,514 2707,491 2734,525 2758,566 2785,543 2809,517 2836,531 2863,567 2887,587 2914,574 2941,550 2965,521 2992,520 3016,547 3043,523 3070,551 3094,530 3121,496 3148,526 3172,526'],
  ['#ffff00', '16,617 60,632 94,644 130,662 170,667 210,658 250,624 290,600 325,589 360,602 403,636 454,667 480,666 530,656 586,655 637,646 700,622 740,615 793,629 880,628 910,610 940,601 1000,607 1050,637 1090,685 1129,721 1180,769 1207,778 1258,787 1309,790 1360,805 1440,805 1500,790 1546,775 1594,708 1645,614 1690,563 1723,557 1780,558 1801,549 1828,557 1880,552 1906,538 1930,517 1981,481 2035,413 2059,374 2113,305 2164,215 2188,222 2215,235 2242,275 2266,322 2293,410 2320,448 2344,466 2371,463 2395,484 2430,472 2473,452 2500,458 2550,428 2580,423 2630,406 2656,415 2680,440 2734,490 2758,513 2785,525 2809,527 2863,545 2941,562 2992,551 3040,532 3110,532 3135,526 3172,526'],
  ['#ff00ff', '16,577 100,602 165,621 220,622 301,613 340,614 430,636 520,643 590,643 640,634 740,631 793,640 844,643 900,634 960,626 1024,626 1080,631 1140,646 1200,669 1282,694 1330,707 1380,728 1410,740 1489,769 1540,778 1570,778 1600,767 1630,753 1672,738 1696,724 1760,697 1828,670 1879,641 1930,608 1981,576 2035,534 2059,506 2113,477 2137,459 2164,430 2190,415 2270,397 2330,386 2395,379 2430,380 2475,373 2540,380 2602,389 2640,408 2680,439 2710,452 2785,469 2860,475 2965,496 3043,508 3094,522 3120,529 3172,535']
];
const highs = [[535, 10, 285], [562, 294, 905], [571, 914, 1685], [526, 1690, 2145], [64, 2157, 2559], [349, 2572, 2948], [520, 2958, 3090], [496, 3114, 3180]];
const lows = [[661, 10, 103], [688, 112, 362], [682, 373, 775], [655, 787, 1317], [826, 1330, 1810], [571, 1822, 2380], [511, 2389, 2872], [586, 2880, 3180]];

const path = (d, color, dash) => `<path d="${d}" stroke="${color}"${dash ? ` stroke-dasharray="${dash}"` : ''}/>`;
const series = list => list.map(([color, pts]) => path('M' + pts, color)).join('');
const thirds = inner => `<g class="crisp" transform="scale(0.3333333)">${inner}</g>`;
const grid = rows => rows.map(y => path(`M6 ${y}H3262`, '#c00000', '3 9')).join('');
const segments = (list, color) => list.map(([y, a, b]) => path(`M${a} ${y}H${b}`, color, '15 12')).join('');
const rect = (x, y, w, h, fill) => `<rect x="${x}" y="${y}" width="${w}" height="${h}" fill="${fill}"/>`;

const colors = { r: '#ff3232', c: '#54ffff', w: '#ffffff' };
const bars = candles.split(' ').map((s, i) => {
  const [hi, top, bottom, low] = s.slice(1).split(',').map(v => Math.round(v / 3));
  const x = Math.round(4.8 + 8.62 * i), h = Math.max(1, bottom - top), c = colors[s[0]];
  let out = rect(x, hi, 1, Math.max(1, low - hi), c) + rect(x - 3, top, 7, h, c);
  if (s[0] === 'r' && h > 2) out += rect(x - 2, top + 1, 5, h - 2, '#000');
  return out;
}).join('');
const marks = [303, 327, 510, 561, 588, 846, 1752, 1984, 2190, 2475, 2529, 2995]
  .map(x => path(`M${x - 6} 171l12 12m0-12l-12 12`, '#ff00ff')).join('') + path('M1981 174h6v6h-6zM2992 174h6v6h-6z', '#ff00ff');

document.getElementById('price').innerHTML =
  thirds(grid([239, 325, 412, 497, 583, 670, 757, 841, 928, 1016])) +
  `<g class="crisp">${bars}</g>` +
  thirds(series(ma) + marks + path('M484 120V1128M390 682H3266', '#c0c0c0') +
    path('M352 1075H385M352 1075l12-9M352 1075l12 9M2190 176l33 11M2190 176l12-6M2190 176l6 12', '#c0c0c0') +
    '<path class="heavy" d="M721 1109H708V1115L720 1120V1125H705M712 1097v10M707 1101h11" stroke="#ff0000"/>') +
  '<text class="gray" x="131" y="363">8.65</text><text class="gray" x="743" y="70">13.87</text>';

const arrow = (x, y) => `<path d="M${x} ${y - 5}l5 5h-3v5h-4v-5h-3z" fill="#ff0000" stroke="#c0c0c0"/>`;
document.getElementById('obv').innerHTML =
  thirds(grid([100, 214, 328, 442, 556, 670, 784]) + segments(highs, '#ff00ff') + segments(lows, '#00ff00') + series(obv) + path('M484 52V842', '#c0c0c0')) +
  arrow(540.5, 176) + arrow(635.5, 165) +
  '<text x="2" y="278" fill="#606060">用到未来数据</text>';

let d = 'M1088.5 24V376', labels = '';
for (let i = 0; i <= 10; i++) {
  const y = Math.round(51 + i * 28.75);
  d += `M1088 ${y + .5}h6M1088 ${y + 14.5}h3M1088 ${y + 7.5}h2M1088 ${y + 22.5}h2`;
  if (i !== 6) labels += `<text x="1136" y="${y + 5}" text-anchor="end">${(14 - i / 2).toFixed(2)}</text>`;
}
document.getElementById('price-axis').innerHTML = `<path class="tick" d="${d}"/><g class="red">${labels}</g>` +
  '<rect x="1089" y="211.500" width="51" height="16" fill="#000080" stroke="#b00000"/><text class="gray" x="1090" y="223">10.93</text>';

d = 'M1088.5 377V655';
labels = '';
for (let i = 0; i < 7; i++) {
  const y = 408 + i * 38;
  d += `M1088 ${y + .5}h6M1088 ${y + 19.5}h3`;
  if (i < 6) labels += `<text x="1136" y="${y + 5}" text-anchor="end">${75000 - i * 5000}</text>`;
}
document.getElementById('obv-axis').innerHTML = `<path class="tick" d="${d}M1088.5 638.500h32v16h-32z"/><rect class="tick" x="1089" y="378" width="49" height="276" stroke-width="2"/><g class="red">${labels}<text x="1090" y="650">X100</text></g>`;
```
